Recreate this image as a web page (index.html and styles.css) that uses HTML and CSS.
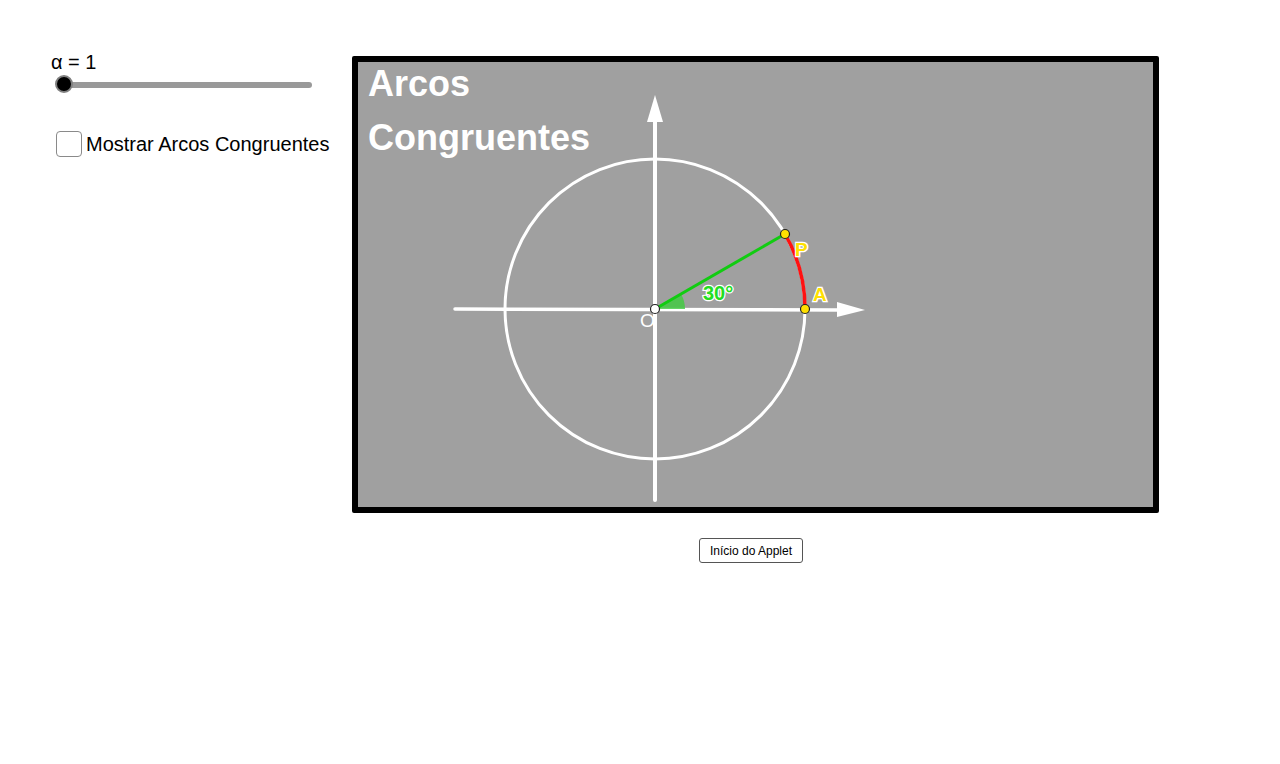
FILE: index.html
```html
<!DOCTYPE html>
<html>
<head>
<meta charset="utf-8">
<link rel="stylesheet" href="styles.css">
</head>
<body>
<div class="app">
  <div class="main">
    <div class="side">
      <div class="slider">
        <div class="slider-label">α = 1</div>
        <div class="track"><span class="knob"></span></div>
      </div>
      <label class="check">
        <span class="box"></span>
        <span class="check-text">Mostrar Arcos Congruentes</span>
      </label>
    </div>
    <div class="stage">
      <div class="frame">
        <svg class="graph" width="795" height="445" viewBox="358 62 795 445" xmlns="http://www.w3.org/2000/svg">
          <rect x="358" y="62" width="795" height="445" fill="#a0a0a0"/>
          <circle cx="655" cy="309" r="150" fill="none" stroke="#fff" stroke-width="3"/>
          <line x1="455" y1="309" x2="840" y2="310" stroke="#fff" stroke-width="3.5" stroke-linecap="round"/>
          <polygon points="837,302 865,310 837,317" fill="#fff"/>
          <line x1="655" y1="500" x2="655" y2="118" stroke="#fff" stroke-width="4" stroke-linecap="round"/>
          <polygon points="647,122 655,95 663,122" fill="#fff"/>
          <path d="M655,309 L685,309 A30,30 0 0 0 681,294 Z" fill="#3dcc3d" fill-opacity="0.8"/>
          <line x1="655" y1="309" x2="785" y2="234" stroke="#11cc11" stroke-width="3"/>
          <path d="M805,309 A150,150 0 0 0 785,234" fill="none" stroke="#ff1111" stroke-width="3.5"/>
          <text x="640" y="327" class="lbl-o">O</text>
          <line x1="655" y1="312" x2="655" y2="330" stroke="#fff" stroke-width="4"/>
          <circle cx="655" cy="309" r="4.5" fill="#fff" stroke="#222" stroke-width="1.2"/>
          <circle cx="785" cy="234" r="4.5" fill="#ffe000" stroke="#222" stroke-width="1.2"/>
          <circle cx="805" cy="309" r="4.5" fill="#ffe000" stroke="#222" stroke-width="1.2"/>
          <text x="703" y="300" class="lbl-ang">30°</text>
          <text x="795" y="256" class="lbl-pt">P</text>
          <text x="813" y="301" class="lbl-pt">A</text>
        </svg>
        <div class="title">Arcos<br>Congruentes</div>
      </div>
    </div>
  </div>
  <div class="actions">
    <button class="btn">Início do Applet</button>
  </div>
</div>
</body>
</html>
```

FILE: styles.css
```css
html, body {
  margin: 0;
  padding: 0;
  background: #fff;
  font-family: "Liberation Sans", Arial, sans-serif;
}
.app {
  width: 1280px;
  height: 764px;
}
.main {
  display: flex;
  padding-top: 52px;
}
.side {
  width: 301px;
  padding-left: 51px;
  box-sizing: content-box;
}
.slider-label {
  font-size: 20px;
  line-height: 20px;
  color: #000;
}
.track {
  position: relative;
  margin-top: 10px;
  margin-left: 6px;
  width: 255px;
  height: 6px;
  border-radius: 3px;
  background: #999;
}
.knob {
  position: absolute;
  left: -2px;
  top: -7px;
  width: 14px;
  height: 14px;
  border-radius: 50%;
  background: #000;
  border: 2px solid #808080;
  box-sizing: content-box;
}
.check {
  display: flex;
  align-items: center;
  margin-top: 43px;
  margin-left: 5px;
  white-space: nowrap;
}
.box {
  width: 24px;
  height: 24px;
  border: 1px solid #8a8a8a;
  border-radius: 4px;
  background: #fff;
  margin-right: 4px;
}
.check-text {
  font-size: 20px;
  color: #000;
}
.stage {
  padding-top: 4px;
}
.frame {
  position: relative;
  width: 795px;
  height: 445px;
  border: 6px solid #000;
  border-radius: 2px;
}
.graph {
  display: block;
}
.title {
  position: absolute;
  left: 10px;
  top: -5px;
  font-weight: bold;
  font-size: 36px;
  line-height: 54px;
  color: #fff;
}
.lbl-o {
  font-family: "Liberation Sans", Arial, sans-serif;
  font-size: 19px;
  fill: #fff;
}
.lbl-ang {
  font-family: "Liberation Sans", Arial, sans-serif;
  font-weight: bold;
  font-size: 20px;
  fill: #22dd22;
  stroke: #fff;
  stroke-width: 2.5px;
  paint-order: stroke;
}
.lbl-pt {
  font-family: "Liberation Sans", Arial, sans-serif;
  font-weight: bold;
  font-size: 19px;
  fill: #ffe000;
  stroke: #fff;
  stroke-width: 2.5px;
  paint-order: stroke;
}
.actions {
  padding-left: 699px;
  padding-top: 25px;
}
.btn {
  font-family: "Liberation Sans", Arial, sans-serif;
  font-size: 12px;
  width: 104px;
  height: 25px;
  padding: 0;
  background: #fff;
  border: 1px solid #555;
  border-radius: 3px;
  color: #000;
}
```
